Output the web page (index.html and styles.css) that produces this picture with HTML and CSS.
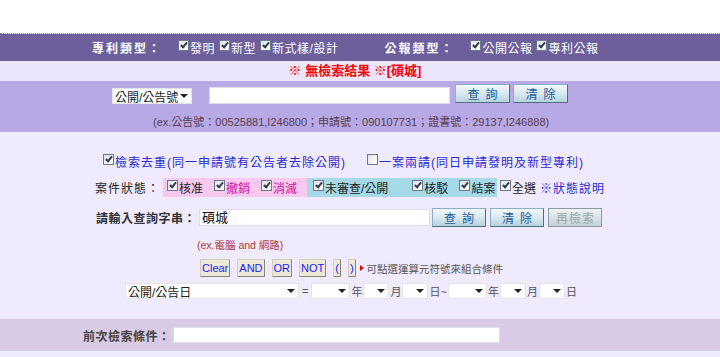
FILE: index.html
```html
<!DOCTYPE html>
<html>
<head>
    <meta charset="utf-8">
    <title>專利檢索</title>
    <link rel="stylesheet" href="styles.css">
</head>
<body>
    <div class="top"></div>

    <div class="typebar">
        <span class="type-label">專利類型：</span>
        <span class="opt"><span class="cb"></span>發明</span>
        <span class="opt"><span class="cb"></span>新型</span>
        <span class="opt"><span class="cb"></span>新式樣/設計</span>
        <span class="type-label second">公報類型：</span>
        <span class="opt"><span class="cb"></span>公開公報</span>
        <span class="opt"><span class="cb"></span>專利公報</span>
    </div>

    <div class="msg">※ 無檢索結果 ※[碩城]</div>

    <div class="quick">
        <div class="quick-row">
            <div class="sel sel-num">公開/公告號<span class="arrow"></span></div>
            <div class="field field-num"></div>
            <button class="btn">查詢</button>
            <button class="btn">清除</button>
        </div>
        <div class="quick-hint">(ex.公告號：00525881,I246800；申請號：090107731；證書號：29137,I246888)</div>
    </div>

    <div class="main">
        <div class="row row-dedup">
            <span class="link-opt"><span class="cb"></span>檢索去重(同一申請號有公告者去除公開)</span>
            <span class="link-opt two"><span class="cb empty"></span>一案兩請(同日申請發明及新型專利)</span>
        </div>

        <div class="row row-status">
            <span class="status-label">案件狀態：</span>
            <span class="box pink">
                <span class="st"><span class="cb"></span>核准</span>
                <span class="st mag"><span class="cb"></span>撤銷</span>
                <span class="st mag"><span class="cb"></span>消滅</span>
            </span>
            <span class="box cyan">
                <span class="st wide"><span class="cb"></span>未審查/公開</span>
                <span class="st"><span class="cb"></span>核駁</span>
                <span class="st"><span class="cb"></span>結案</span>
            </span>
            <span class="st all"><span class="cb"></span>全選</span>
            <span class="note">※狀態說明</span>
        </div>

        <div class="row row-query">
            <span class="q-label">請輸入查詢字串：</span>
            <div class="field field-query">碩城</div>
            <button class="btn">查詢</button>
            <button class="btn">清除</button>
            <button class="btn off">再檢索</button>
        </div>

        <div class="row row-example">(ex.電腦 and 網路)</div>

        <div class="row row-ops">
            <button class="op">Clear</button>
            <button class="op">AND</button>
            <button class="op">OR</button>
            <button class="op">NOT</button>
            <button class="op">(</button>
            <button class="op">)</button>
            <span class="tri"></span>
            <span class="op-hint">可點選運算元符號來組合條件</span>
        </div>

        <div class="row row-date">
            <div class="sel sel-date">公開/公告日<span class="arrow"></span></div>
            <span class="dl eq">=</span>
            <div class="sel s-y"><span class="arrow"></span></div><span class="dl">年</span>
            <div class="sel s-m"><span class="arrow"></span></div><span class="dl">月</span>
            <div class="sel s-m"><span class="arrow"></span></div><span class="dl">日~</span>
            <div class="sel s-y"><span class="arrow"></span></div><span class="dl">年</span>
            <div class="sel s-m"><span class="arrow"></span></div><span class="dl">月</span>
            <div class="sel s-m"><span class="arrow"></span></div><span class="dl">日</span>
        </div>
    </div>

    <div class="prev">
        <span class="prev-label">前次檢索條件：</span>
        <div class="field field-prev"></div>
    </div>
    <div class="tail"></div>
</body>
</html>
```

FILE: styles.css
```css
body {
    margin: 0;
    background-color: #ffffff;
    font-family: "Liberation Sans", "Noto Sans CJK TC", sans-serif;
    font-size: 12px;
    color: #222;
    white-space: nowrap;
}

.top {
    height: 33px;
    border-bottom: 1px dotted #8a8a8a;
}

/* checkbox look */
.cb {
    display: inline-block;
    width: 9px;
    height: 9px;
    border: 1px solid #6a7a8c;
    background: linear-gradient(135deg, #dfe3e8, #ffffff);
    margin-right: 1px;
    position: relative;
    flex: none;
    align-self: flex-start;
    margin-top: 1px;
}

.cb::after {
    content: '';
    position: absolute;
    left: 3px;
    top: 0;
    width: 2px;
    height: 5px;
    border: solid #333a48;
    border-width: 0 2px 2px 0;
    transform: rotate(40deg);
}

.cb.empty::after {
    display: none;
}

.typebar {
    height: 27px;
    background-color: #6c5f9c;
    color: #ffffff;
    display: flex;
    align-items: center;
    padding-left: 92px;
}

.type-label {
    font-weight: bold;
    letter-spacing: 2px;
    margin-right: 16px;
}

.type-label.second {
    margin-left: 42px;
}

.opt {
    display: flex;
    align-items: center;
    margin-right: 4px;
    letter-spacing: 0.5px;
}

.msg {
    height: 20px;
    background-color: #ece6fc;
    color: #ff0000;
    font-weight: bold;
    font-size: 13px;
    text-align: center;
    line-height: 20px;
    padding-right: 10px;
}

.quick {
    background-color: #b6a9e6;
    height: 51px;
    box-sizing: border-box;
    padding-top: 3px;
}

.quick-row {
    display: flex;
    align-items: flex-start;
    padding-left: 112px;
    height: 22px;
}

.sel {
    background-color: #ffffff;
    height: 16px;
    border: 1px solid #e4e4e4;
    box-sizing: border-box;
    display: flex;
    align-items: center;
    justify-content: space-between;
    padding: 0 3px 0 2px;
    font-size: 12px;
    color: #222;
    flex: none;
}

.arrow {
    width: 0;
    height: 0;
    border-left: 4px solid transparent;
    border-right: 4px solid transparent;
    border-top: 4px solid #222;
    margin-left: auto;
}

.sel-num {
    width: 80px;
    margin-top: 4px;
}

.field {
    background-color: #ffffff;
    border: 1px solid #e0dcea;
    height: 17px;
    box-sizing: border-box;
    font-size: 13px;
    line-height: 15px;
    padding-left: 2px;
    color: #111;
    flex: none;
}

.field-num {
    width: 241px;
    margin: 3px 5px 0 17px;
}

.btn {
    height: 19px;
    width: 55px;
    padding: 0;
    margin-right: 3px;
    border: 1px solid #4e6f86;
    border-top-color: #8eb0c4;
    border-left-color: #8eb0c4;
    background: linear-gradient(#f2f8fb, #d5e7ef 55%, #b6d2de);
    color: #1c5d9e;
    font-family: "Noto Sans CJK TC", sans-serif;
    font-size: 12px;
    letter-spacing: 6px;
    text-indent: 6px;
    line-height: 17px;
    flex: none;
}

.btn.off {
    color: #9aa6aa;
    letter-spacing: 1px;
    text-indent: 1px;
    background: linear-gradient(#eef2f3, #d6e0e3 55%, #c4d2d6);
    border-color: #8a9aa2;
}

.quick-hint {
    padding-left: 153px;
    margin-top: 7px;
    color: #5a3c4e;
    font-size: 11px;
}

.main {
    background-color: #efeafd;
    height: 187px;
    box-sizing: border-box;
    padding-top: 21px;
}

.row {
    display: flex;
    align-items: center;
}

.row-dedup {
    padding-left: 103px;
    height: 16px;
    color: #2a2ad0;
    letter-spacing: 1px;
}

.link-opt {
    display: flex;
    align-items: center;
}

.link-opt.two {
    margin-left: 21px;
}

.row-status {
    margin-top: 9px;
    padding-left: 95px;
    height: 19px;
}

.status-label {
    letter-spacing: 1px;
    margin-right: 3px;
}

.box {
    display: flex;
    align-items: center;
    height: 19px;
    box-sizing: border-box;
}

.box.pink {
    background-color: #f8c8ee;
    width: 144px;
    padding-left: 4px;
}

.box.cyan {
    background-color: #a5dae6;
    width: 190px;
    padding-left: 6px;
}

.st {
    display: flex;
    align-items: center;
    margin-right: 11px;
}

.st.wide {
    margin-right: 24px;
}

.st.mag {
    color: #c8149a;
}

.st.all {
    margin-left: 3px;
    margin-right: 4px;
}

.note {
    color: #2a2ad0;
    letter-spacing: 1px;
}

.row-query {
    margin-top: 10px;
    padding-left: 96px;
    height: 20px;
}

.q-label {
    font-weight: bold;
    letter-spacing: 0.5px;
    color: #333;
    margin-right: 3px;
}

.field-query {
    width: 231px;
    margin-right: 2px;
}

.row-query .btn {
    width: 54px;
    margin-right: 4px;
}

.row-example {
    margin-top: 10px;
    padding-left: 197px;
    color: #b03838;
    font-size: 10.5px;
    height: 14px;
}

.row-ops {
    margin-top: 8px;
    padding-left: 200px;
    height: 18px;
}

.op {
    height: 18px;
    padding: 0 1px;
    margin-right: 7px;
    border: 1px solid #d4d0bc;
    border-right-color: #8a8672;
    border-bottom-color: #8a8672;
    background-color: #ece9d8;
    color: #1a1aff;
    font-family: "Liberation Sans", sans-serif;
    font-size: 11px;
    line-height: 16px;
    flex: none;
}

.tri {
    width: 0;
    height: 0;
    border-top: 3px solid transparent;
    border-bottom: 3px solid transparent;
    border-left: 4px solid #d01010;
    margin: 0 3px 0 -3px;
}

.op-hint {
    font-size: 10.5px;
    color: #555;
}

.row-date {
    margin-top: 6px;
    padding-left: 125px;
    height: 16px;
    color: #555;
}

.sel-date {
    width: 174px;
}

.s-y {
    width: 39px;
}

.s-m {
    width: 26px;
}

.dl {
    font-size: 11px;
    padding: 0 1px;
}

.dl.eq {
    padding: 0 3px 0 3px;
}

.prev {
    height: 32px;
    background-color: #d9cbe6;
    display: flex;
    align-items: center;
    padding-left: 83px;
}

.prev-label {
    font-weight: bold;
    color: #444;
    letter-spacing: 0.5px;
    margin-right: 2px;
}

.field-prev {
    width: 327px;
    height: 16px;
}

.tail {
    height: 7px;
    background-color: #efeafd;
}
```
